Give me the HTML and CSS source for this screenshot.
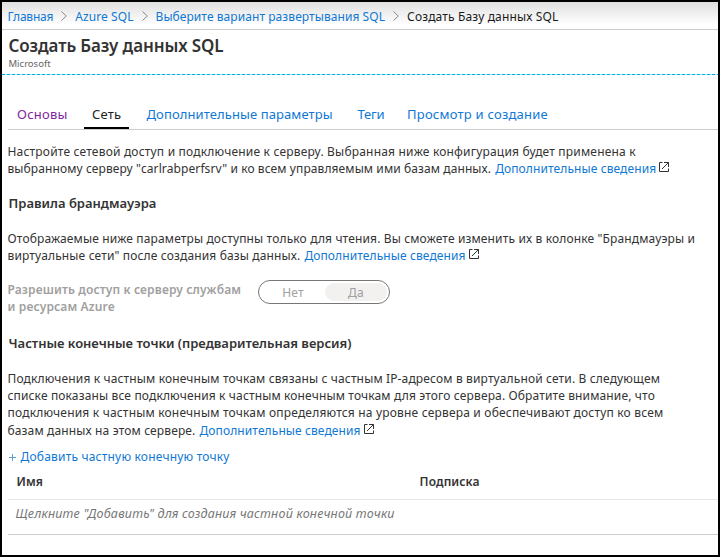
FILE: index.html
```
<!DOCTYPE html>
<html lang="ru">
<head>
<meta charset="utf-8">
<title>Создать Базу данных SQL</title>
<link rel="stylesheet" href="styles.css">
</head>
<body>
<svg class="defs" width="0" height="0">
  <symbol id="chevron" viewBox="0 0 6 10"><path d="M.5 .5L5.3 5L.5 9.5" fill="none" stroke="#8a8a8a"/></symbol>
  <symbol id="external" viewBox="0 0 10 10"><path d="M3.500 .5H.5V9.500H9.500V6.500M5 .5H9.500V5M9.500 .5L3 7" fill="none" stroke="#333"/></symbol>
</svg>
<div class="blade">
  <nav class="crumbs">
    <a class="c1">Главная</a><svg class="chev"><use href="#chevron"/></svg>
    <a class="c2">Azure SQL</a><svg class="chev"><use href="#chevron"/></svg>
    <a class="c3">Выберите вариант развертывания SQL</a><svg class="chev"><use href="#chevron"/></svg>
    <span class="c4">Создать Базу данных SQL</span>
  </nav>
  <header class="head">
    <h1>Создать Базу данных SQL</h1>
    <div class="vendor">Microsoft</div>
  </header>
  <div class="tabs">
    <a class="tab visited">Основы</a>
    <a class="tab active">Сеть</a>
    <a class="tab params">Дополнительные параметры</a>
    <a class="tab tags">Теги</a>
    <a class="tab review">Просмотр и создание</a>
  </div>
  <main>
    <div class="para intro">
      <div class="line s20">Настройте сетевой доступ и подключение к серверу. Выбранная ниже конфигурация будет применена к</div>
      <div class="line"><span class="s10">выбранному серверу "carlrabperfsrv" и ко всем управляемым ими базам данных.</span><a class="more">Дополнительные сведения</a><svg class="ext near"><use href="#external"/></svg></div>
    </div>
    <h2>Правила брандмауэра</h2>
    <div class="para">
      <div class="line s15">Отображаемые ниже параметры доступны только для чтения. Вы сможете изменить их в колонке "Брандмауэры и</div>
      <div class="line"><span class="s15">виртуальные сети" после создания базы данных.</span><a class="more">Дополнительные сведения</a><svg class="ext"><use href="#external"/></svg></div>
    </div>
    <div class="field">
      <label>Разрешить доступ к серверу службам<br>и ресурсам Azure</label>
      <div class="toggle"><span class="no">Нет</span><span class="yes">Да</span></div>
    </div>
    <h2 class="private">Частные конечные точки (предварительная версия)</h2>
    <div class="para">
      <div class="line s15">Подключения к частным конечным точкам связаны с частным IP-адресом в виртуальной сети. В следующем</div>
      <div class="line s15">списке показаны все подключения к частным конечным точкам для этого сервера. Обратите внимание, что</div>
      <div class="line s20">подключения к частным конечным точкам определяются на уровне сервера и обеспечивают доступ ко всем</div>
      <div class="line last"><span class="s15">базам данных на этом сервере.</span><a class="more">Дополнительные сведения</a><svg class="ext"><use href="#external"/></svg></div>
    </div>
    <a class="add"><svg class="plus" viewBox="0 0 7 7"><path d="M0 3.500H7M3.500 0V7" stroke="#5a9fdc" fill="none"/></svg>Добавить частную конечную точку</a>
    <div class="grid">
      <div class="row header"><span class="name">Имя</span><span>Подписка</span></div>
      <div class="row empty">Щелкните "Добавить" для создания частной конечной точки</div>
    </div>
  </main>
</div>
</body>
</html>
```
FILE: styles.css
```
* { box-sizing: border-box; }
body {
  margin: 0;
  font: 12px/17px "Noto Sans", "Open Sans", sans-serif;
  color: #333;
  background: #fff;
}
.defs { display: block; }
.blade {
  height: 557px;
  border: 2px solid #000;
  overflow: hidden;
}
a { color: #0f78d4; }
svg { flex: none; }

.crumbs {
  display: flex;
  align-items: center;
  height: 28px;
  padding: 1px 0 0 5.5px;
  border-bottom: 1px solid #ccc;
  background: linear-gradient(#e0e0e0, #fff 85%);
  white-space: nowrap;
}
.chev { width: 6px; height: 10px; margin: 0 8px; }
.c1 { letter-spacing: -.2px; }
.c2 { letter-spacing: .07px; }
.c3 { letter-spacing: .07px; }
.c4 { letter-spacing: .14px; color: #1a1a1a; }

.head {
  height: 45px;
  padding: 5px 0 0 6.500px;
  background: repeating-linear-gradient(90deg, #00b0e8 0 3px, #a5e0f5 3px 5px) 0 100% / 100% 1px no-repeat;
}
h1 {
  margin: 0;
  font-size: 17px;
  line-height: 22px;
  font-weight: 600;
  letter-spacing: -.113px;
}
.vendor { font-size: 9.5px; line-height: 14px; color: #666; }

.tabs {
  display: flex;
  gap: 9px;
  height: 30px;
  margin: 25px 0 0 6px;
  padding-left: 1px;
  border-bottom: 1px solid #ccc;
  font-size: 13px;
  line-height: 28px;
  white-space: nowrap;
}
.tab { padding: 0 8px; }
.visited { width: 66px; color: #8027a0; letter-spacing: .25px; }
.active { width: 45px; color: #222; letter-spacing: .2px; border-bottom: 2px solid #000; }
.params { width: 201px; padding-left: 8.5px; letter-spacing: .1px; }
.tags { width: 42px; padding-left: 9.5px; letter-spacing: -.2px; }
.review { letter-spacing: .23px; }

main { padding-left: 5.5px; }
.intro { margin-top: 13px; }
.line { display: flex; height: 17px; white-space: nowrap; }
.last { height: 18px; padding-top: 1px; }
.s10 { letter-spacing: .098px; }
.s15 { letter-spacing: .142px; }
.s20 { letter-spacing: .19px; }
.more { width: 161px; margin-left: 4px; letter-spacing: .1px; }
.ext { width: 10px; height: 10px; margin: 2px 0 0 4px; }
.near { margin-left: 3px; }
h2 {
  margin: 18px 0 18px 1px;
  font-size: 13px;
  line-height: 17px;
  font-weight: 600;
}
.field { display: flex; height: 35px; margin-top: 16px; }
label {
  width: 250.5px;
  padding-top: 1px;
  color: #a0a0a0;
  font-weight: 600;
  letter-spacing: .145px;
  white-space: nowrap;
}
.toggle {
  display: flex;
  width: 132px;
  height: 24px;
  padding: 2px;
  border: 1px solid #777;
  border-radius: 12px;
  line-height: 19px;
  color: #a0a0a0;
  text-align: center;
}
.toggle span { height: 18px; border-radius: 9px; }
.no { width: 64px; letter-spacing: .2px; }
.yes { width: 62px; background: #f2f1f0; letter-spacing: .4px; }
.private { margin-top: 20px; letter-spacing: -.018px; }

.add {
  display: flex;
  align-items: center;
  height: 17px;
  margin-top: 9px;
  padding-left: 1px;
  letter-spacing: .2px;
}
.plus { width: 7px; height: 7px; margin: 1px 5px 0 0; }
.grid { margin-left: .5px; }
.row { display: flex; height: 35px; padding: 8px 0 0 8.5px; border-bottom: 1px solid #e6e6e6; }
.header { font-weight: 600; letter-spacing: .13px; }
.name { width: 403px; }
.empty {
  padding: 5px 0 0 7.5px;
  border-color: #ccc;
  color: #777;
  font-size: 12.5px;
  font-style: italic;
  letter-spacing: .2px;
}
```
